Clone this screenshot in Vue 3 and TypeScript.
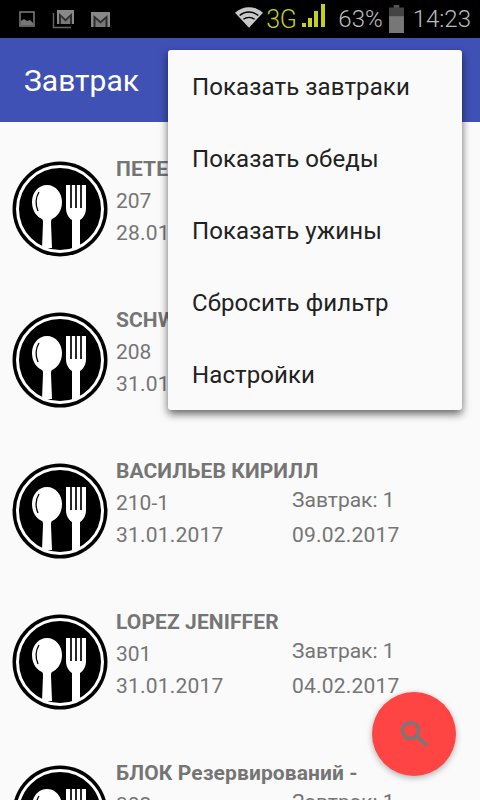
<script setup lang="ts">
interface Row { name: string; room: string; from: string; meal: string; to: string }
const rows: Row[] = [
  { name: 'ПЕТЕРОВ ИВАН', room: '207', from: '28.01.2017', meal: 'Завтрак: 1', to: '02.02.2017' },
  { name: 'SCHWARZ ANNA', room: '208', from: '31.01.2017', meal: 'Завтрак: 1', to: '05.02.2017' },
  { name: 'ВАСИЛЬЕВ КИРИЛЛ', room: '210-1', from: '31.01.2017', meal: 'Завтрак: 1', to: '09.02.2017' },
  { name: 'LOPEZ JENIFFER', room: '301', from: '31.01.2017', meal: 'Завтрак: 1', to: '04.02.2017' },
  { name: 'БЛОК Резервирований -', room: '302', from: '31.01.2017', meal: 'Завтрак: 1', to: '04.02.2017' },
]
const menu: string[] = ['Показать завтраки', 'Показать обеды', 'Показать ужины', 'Сбросить фильтр', 'Настройки']
</script>

<template>
  <div class="screen">
    <div class="status">
      <div class="status-left">
        <svg class="si" width="16" height="16" viewBox="0 0 16 16">
          <rect x="1" y="1" width="14" height="14" fill="none" stroke="#777" stroke-width="1.6" />
          <path d="M2 14 L2 10 L5 8 L8 10 L11 9 L14 12 L14 14 Z" fill="#777" />
        </svg>
        <svg class="si mail2" width="23" height="20" viewBox="0 0 23 20">
          <path d="M1.500 4 V18.500 H19" fill="none" stroke="#666" stroke-width="1.4" />
          <rect x="5" y="1" width="17" height="14" fill="#888" />
          <path d="M7 15 V4 L13.500 10 L20 4 V15 Z" fill="#2c2c2c" />
          <path d="M9 15 V8 L13.500 12.500 L18 8 V15 Z" fill="#777" />
        </svg>
        <svg class="si" width="19" height="15" viewBox="0 0 19 15">
          <rect x="0" y="0" width="19" height="15" fill="#888" />
          <path d="M2.500 15 V3 L9.500 9 L16.500 3 V15 Z" fill="#2c2c2c" />
          <path d="M4.500 15 V7 L9.500 11.500 L14.500 7 V15 Z" fill="#777" />
        </svg>
      </div>
      <div class="status-right">
        <svg width="28" height="23" viewBox="0 0 30 24" class="wifi">
          <path d="M0 8 A22 22 0 0 1 30 8 L15 24 Z" fill="#c8c8c8" />
          <path d="M5 11 A15 15 0 0 1 25 11" fill="none" stroke="#000" stroke-width="1.500" />
          <path d="M9 15 A10 10 0 0 1 21 15" fill="none" stroke="#000" stroke-width="1.500" />
        </svg>
        <span class="net">3G</span>
        <svg width="24" height="24" viewBox="0 0 24 24" class="bars">
          <rect x="0" y="20" width="4" height="4" fill="#c4cf1e" />
          <rect x="6" y="15" width="4" height="9" fill="#c4cf1e" />
          <rect x="12" y="8" width="4" height="16" fill="#c4cf1e" />
          <rect x="19" y="1" width="4" height="23" fill="#c4cf1e" />
        </svg>
        <span class="pct">63%</span>
        <svg width="15" height="28" viewBox="0 0 16 30" class="batt">
          <rect x="5" y="0" width="6" height="3" fill="#555" />
          <rect x="0" y="3" width="16" height="27" fill="#777" />
          <rect x="0" y="3" width="16" height="9" fill="#444" />
        </svg>
        <span class="time">14:23</span>
      </div>
    </div>

    <header class="toolbar">Завтрак</header>

    <main class="list">
      <div v-for="r in rows" :key="r.room" class="row">
        <svg class="plate" width="96" height="96" viewBox="0 0 96 96">
          <circle cx="48" cy="48" r="47.500" fill="#000" />
          <circle cx="48" cy="48" r="42.500" fill="#000" stroke="#fff" stroke-width="3" />
          <path d="M35 24 C44 24 50 32 50 41 C50 50 45 56 40 58 C39 59 39 60 39 62 L40 87 H30 L31 62 C31 60 31 59 30 58 C25 56 20 50 20 41 C20 32 26 24 35 24 Z" fill="#fff" />
          <path d="M27 31 C24 36 23 43 26 50" fill="none" stroke="#000" stroke-width="1.300" />
          <path d="M54 24 H74 V47 C74 53 71 57 68 59 L68 87 H60 L60 59 C57 57 54 53 54 47 Z" fill="#fff" />
          <path d="M59 24 V47 M64 24 V47 M69 24 V47" stroke="#000" stroke-width="1.700" />
        </svg>
        <div class="info">
          <div class="name">{{ r.name }}</div>
          <div class="cols">
            <div class="col left">
              <div>{{ r.room }}</div>
              <div class="date">{{ r.from }}</div>
            </div>
            <div class="col right">
              <div>{{ r.meal }}</div>
              <div class="date">{{ r.to }}</div>
            </div>
          </div>
        </div>
      </div>
    </main>

    <div class="menu">
      <div v-for="m in menu" :key="m" class="menu-item">{{ m }}</div>
    </div>

    <div class="fab">
      <svg width="30" height="30" viewBox="0 0 30 30">
        <circle cx="11.500" cy="11.500" r="8" fill="none" stroke="#7d7674" stroke-width="3.600" />
        <path d="M17.500 17.500 L27 25.500" stroke="#7d7674" stroke-width="4" stroke-linecap="round" />
      </svg>
    </div>
  </div>
</template>

<style>
html, body { margin: 0; padding: 0; overflow: hidden; background: #fafafa; }
</style>

<style scoped>
.screen {
  position: relative;
  width: 480px;
  height: 800px;
  overflow: hidden;
  background: #fafafa;
  font-family: Roboto, "Noto Sans", sans-serif;
}
.status {
  height: 38px;
  background: #000;
  display: flex;
  align-items: center;
  justify-content: space-between;
  padding: 0 9px 0 19px;
  color: #bdbdbd;
}
.status-left { display: flex; align-items: center; gap: 15px; }
.status-right { display: flex; align-items: center; height: 38px; }
.si { display: block; }
.mail2 { margin-left: 2px; margin-right: 1px; }
.wifi { margin-right: 3px; margin-top: -6px; }
.net { color: #c4cf1e; font-size: 25px; font-weight: 300; margin-right: 6px; letter-spacing: -0.5px; }
.bars { margin-top: -8px; margin-right: 12px; }
.pct { font-size: 24px; font-weight: 300; margin-right: 6px; }
.batt { margin-right: 9px; }
.time { font-size: 24px; font-weight: 300; }
.toolbar {
  height: 84px;
  background: #3f51b5;
  color: #fff;
  display: flex;
  align-items: center;
  padding-left: 24px;
  font-size: 30px;
}
.list { display: flex; flex-direction: column; padding-top: 30px; }
.row {
  height: 151px;
  flex: none;
  box-sizing: border-box;
  display: flex;
  padding-left: 12px;
}
.plate { flex: none; margin-top: 9px; }
.info { margin-left: 8px; padding-top: 1px; color: #757575; font-size: 21px; }
.name { font-size: 21px; font-weight: 700; line-height: 32px; white-space: nowrap; letter-spacing: 0.1px; }
.cols { display: flex; }
.col { line-height: 32px; white-space: nowrap; }
.date { letter-spacing: 0.2px; }
.left { width: 176px; }
.right { margin-top: -3px; }
.right .date { margin-top: 3px; }
.menu {
  position: absolute;
  left: 168px;
  top: 50px;
  width: 294px;
  height: 360px;
  background: #fafafa;
  border-radius: 3px;
  box-shadow: 0 4px 9px rgba(0, 0, 0, 0.6);
  display: flex;
  flex-direction: column;
}
.menu-item {
  height: 72px;
  flex: none;
  box-sizing: border-box;
  display: flex;
  align-items: center;
  padding: 2px 0 0 24px;
  font-size: 24px;
  letter-spacing: 0.1px;
  color: #212121;
}
.fab {
  position: absolute;
  left: 372px;
  top: 692px;
  width: 84px;
  height: 84px;
  border-radius: 50%;
  background: #ff4444;
  box-shadow: 0 2px 6px rgba(0, 0, 0, 0.3);
  display: flex;
  align-items: center;
  justify-content: center;
}
</style>
